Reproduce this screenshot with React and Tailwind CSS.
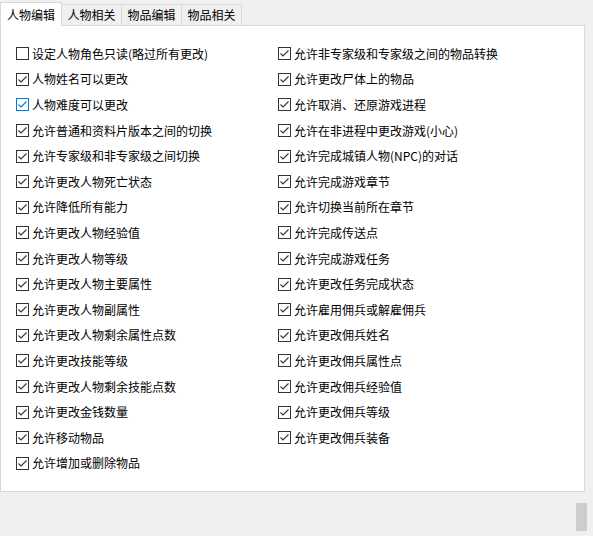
import React from 'react'

const left = [
  ['设定人物角色只读(略过所有更改)', false],
  ['人物姓名可以更改', true],
  ['人物难度可以更改', true, true],
  ['允许普通和资料片版本之间的切换', true],
  ['允许专家级和非专家级之间切换', true],
  ['允许更改人物死亡状态', true],
  ['允许降低所有能力', true],
  ['允许更改人物经验值', true],
  ['允许更改人物等级', true],
  ['允许更改人物主要属性', true],
  ['允许更改人物副属性', true],
  ['允许更改人物剩余属性点数', true],
  ['允许更改技能等级', true],
  ['允许更改人物剩余技能点数', true],
  ['允许更改金钱数量', true],
  ['允许移动物品', true],
  ['允许增加或删除物品', true],
]

const right = [
  '允许非专家级和专家级之间的物品转换',
  '允许更改尸体上的物品',
  '允许取消、还原游戏进程',
  '允许在非进程中更改游戏(小心)',
  '允许完成城镇人物(NPC)的对话',
  '允许完成游戏章节',
  '允许切换当前所在章节',
  '允许完成传送点',
  '允许完成游戏任务',
  '允许更改任务完成状态',
  '允许雇用佣兵或解雇佣兵',
  '允许更改佣兵姓名',
  '允许更改佣兵属性点',
  '允许更改佣兵经验值',
  '允许更改佣兵等级',
  '允许更改佣兵装备',
]

const tabs = ['人物编辑', '人物相关', '物品编辑', '物品相关']

function Check({ label, checked, focused }) {
  const color = focused ? '#0078d7' : '#333333'
  return (
    <label className="flex items-center h-[25.6px] gap-[3px] text-[12px] text-black whitespace-nowrap">
      <span
        className={`w-[13px] h-[13px] border bg-white flex items-center justify-center ${focused ? 'border-[#0078d7]' : 'border-[#333333]'}`}
      >
        {checked && (
          <svg width="11" height="11" viewBox="0 0 11 11">
            <path d="M1.5 5.5 L4 8 L9.5 2.5" fill="none" stroke={color} strokeWidth="1.1" />
          </svg>
        )}
      </span>
      <span>{label}</span>
    </label>
  )
}

export default function App() {
  return (
    <div
      className="w-[593px] h-[536px] bg-[#f0f0f0] overflow-hidden"
      style={{ fontFamily: '"Noto Sans CJK SC", "Noto Sans", sans-serif' }}
    >
      <div className="flex items-end h-[26px] relative z-10">
        {tabs.map((t, i) =>
          i === 0 ? (
            <div
              key={t}
              className="h-[24px] w-[62px] bg-white border border-b-0 border-[#d9d9d9] flex items-center justify-center text-[12px] text-black"
            >
              {t}
            </div>
          ) : (
            <div
              key={t}
              className="h-[21px] mb-px w-[60px] bg-[#f0f0f0] border border-l-0 border-b-0 border-[#d9d9d9] flex items-center justify-center text-[12px] text-black"
            >
              {t}
            </div>
          )
        )}
      </div>
      <div className="-mt-px w-[585px] h-[467px] bg-white border border-[#d9d9d9] pt-[15px] pl-[15px]">
        <div className="grid grid-cols-[262px_1fr]">
          <div className="flex flex-col">
            {left.map(([l, c, f]) => (
              <Check key={l} label={l} checked={c} focused={f} />
            ))}
          </div>
          <div className="flex flex-col">
            {right.map((l) => (
              <Check key={l} label={l} checked />
            ))}
          </div>
        </div>
      </div>
      <div className="flex justify-end pr-[6px] pt-[11px]">
        <div className="w-[11px] h-[28px] bg-[#cdcdcd]" />
      </div>
    </div>
  )
}
